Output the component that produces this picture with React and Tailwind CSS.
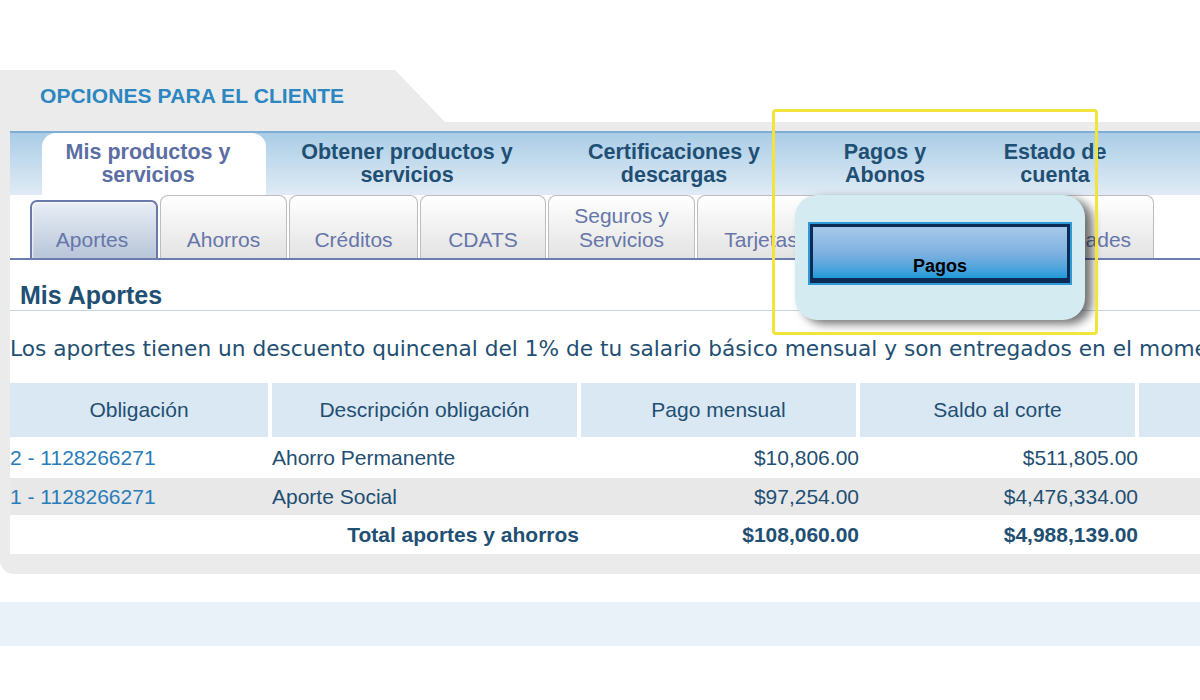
import React from 'react';

const mainTabs = [
    { label: ['Obtener productos y', 'servicios'], w: 'w-[282px]' },
    { label: ['Certificaciones y', 'descargas'], w: 'w-[252px]' },
    { label: ['Pagos y', 'Abonos'], w: 'w-[170px]' },
    { label: ['Estado de', 'cuenta'], w: 'w-[170px]' },
];

const subTabs = [
    { label: ['Ahorros'], w: 'w-[127px]' },
    { label: ['Créditos'], w: 'w-[129px]' },
    { label: ['CDATS'], w: 'w-[126px]' },
    { label: ['Seguros y', 'Servicios'], w: 'w-[147px]' },
    { label: ['Tarjetas'], w: 'w-[128px]' },
    { label: ['Convenios'], w: 'w-[173px]' },
    { label: ['Novedades'], w: 'w-[152px]' },
];

const rows = [
    { id: '2 - 1128266271', desc: 'Ahorro Permanente', pago: '$10,806.00', saldo: '$511,805.00', bg: 'bg-white', h: 'h-[40px]' },
    { id: '1 - 1128266271', desc: 'Aporte Social', pago: '$97,254.00', saldo: '$4,476,334.00', bg: 'bg-[#e8e8e8]', h: 'h-[38px]' },
];

const App = () => {
    return (
        <div className="relative w-[1200px] h-[700px] overflow-hidden bg-white font-['Liberation_Sans',Arial,sans-serif]">
            <div className="pt-[70px]">
                {/* panel header */}
                <div className="w-[445px] h-[52px] bg-[#ebebeb] [clip-path:polygon(0_0,395px_0,445px_100%,0_100%)] pl-[40px] flex items-center">
                    <span className="text-[21px] font-bold text-[#2b86c1] tracking-[0.1px]">OPCIONES PARA EL CLIENTE</span>
                </div>

                <div className="w-[1240px] bg-[#ebebeb] pl-[10px] pt-[9px] pb-[20px] rounded-bl-[14px]">
                    <div className="bg-white">
                        {/* main tabs */}
                        <div className="h-[64px] border-t-2 border-[#7eaed6] bg-linear-to-b from-[#aacde7] to-[#e0ebf5] flex items-end pl-[32px]">
                            <div className="w-[224px] h-[62px] bg-white rounded-t-[14px] pr-[12px] flex flex-col items-center justify-center text-[21.5px] leading-[23px] font-bold text-[#5b6ea3]">
                                <span>Mis productos y</span>
                                <span>servicios</span>
                            </div>
                            {mainTabs.map((t) => (
                                <div key={t.label[0]} className={`${t.w} h-[62px] flex flex-col items-center justify-center text-[21.5px] leading-[23px] font-bold text-[#1f4f73]`}>
                                    {t.label.map((l) => <span key={l}>{l}</span>)}
                                </div>
                            ))}
                        </div>

                        {/* sub tabs */}
                        <div className="h-[65px] flex items-end pl-[20px] gap-[2px] border-b-2 border-[#6b7cb0]">
                            <div className="w-[128px] h-[58px] rounded-t-[7px] border-2 border-b-0 border-[#6a7aa8] bg-linear-to-b from-[#e9eef5] to-[#b8c5d9] shadow-[inset_1px_1px_2px_rgba(255,255,255,0.8)] flex items-end justify-center pb-[6px] pr-[4px] text-[21px] leading-[24px] text-[#6676aa]">
                                Aportes
                            </div>
                            {subTabs.map((t) => (
                                <div key={t.label[0]} className={`${t.w} h-[63px] rounded-t-[8px] border border-b-0 border-[#bdbdbd] bg-linear-to-b from-white to-[#e3e3e3] flex flex-col items-center justify-end pb-[6px] text-[21px] leading-[24px] text-[#6676aa]`}>
                                    {t.label.map((l) => <span key={l}>{l}</span>)}
                                </div>
                            ))}
                        </div>

                        {/* section title */}
                        <div className="h-[51px] pt-[21px] pl-[10px] border-b border-[#c8d4e2]">
                            <h2 className="text-[25px] leading-[29px] font-bold text-[#1f4f73]">Mis Aportes</h2>
                        </div>

                        <p className="mt-[26px] h-[24px] whitespace-nowrap overflow-hidden text-[21.7px] leading-[24px] text-[#1f4f73] font-['DejaVu_Sans',Verdana,sans-serif]">
                            Los aportes tienen un descuento quincenal del 1% de tu salario básico mensual y son entregados en el momento de tu retiro.
                        </p>

                        {/* table */}
                        <div className="mt-[22px] text-[21px] text-[#1f4f73]">
                            <div className="grid grid-cols-[258px_305px_275px_275px_1fr] gap-x-[4px] h-[54px]">
                                <div className="bg-[#dae8f3] flex items-center justify-center">Obligación</div>
                                <div className="bg-[#dae8f3] flex items-center justify-center">Descripción obligación</div>
                                <div className="bg-[#dae8f3] flex items-center justify-center">Pago mensual</div>
                                <div className="bg-[#dae8f3] flex items-center justify-center">Saldo al corte</div>
                                <div className="bg-[#dae8f3]"></div>
                            </div>
                            {rows.map((r) => (
                                <div key={r.id} className={`grid grid-cols-[258px_312px_279px_279px_1fr] items-center ${r.h} ${r.bg} border-t border-white`}>
                                    <div className="text-[#2a7cb9]">{r.id}</div>
                                    <div className="pl-[4px]">{r.desc}</div>
                                    <div className="text-right">{r.pago}</div>
                                    <div className="text-right">{r.saldo}</div>
                                    <div></div>
                                </div>
                            ))}
                            <div className="grid grid-cols-[258px_312px_279px_279px_1fr] items-center h-[39px] bg-white font-bold border-t border-white">
                                <div></div>
                                <div className="text-right pr-[1px]">Total aportes y ahorros</div>
                                <div className="text-right">$108,060.00</div>
                                <div className="text-right">$4,988,139.00</div>
                                <div></div>
                            </div>
                        </div>
                    </div>
                </div>

                <div className="h-[28px]"></div>
                <div className="h-[44px] bg-[#e9f1f9]"></div>
            </div>

            {/* highlighted popup */}
            <div className="absolute left-[795px] top-[195px] w-[290px] h-[125px] rounded-[22px] bg-[#d3ebf1] shadow-[7px_4px_10px_rgba(0,0,0,0.55)] pt-[27px] pl-[13px]">
                <div className="w-[264px] h-[63px] bg-[#2e9ad8] p-[2px]">
                    <div className="w-full h-full border-[3px] border-[#0c2c55] border-b-[5px] bg-linear-to-b from-[#a6c9ea] via-[#7fb1e0] to-[#1a9bd9] flex items-end justify-center pb-[1px]">
                        <span className="text-[18px] font-bold text-black leading-[22px]">Pagos</span>
                    </div>
                </div>
            </div>
            <div className="absolute left-[772px] top-[109px] w-[326px] h-[226px] border-[3px] border-[#f3e43c] rounded-[4px]"></div>
        </div>
    );
};

export default App;
